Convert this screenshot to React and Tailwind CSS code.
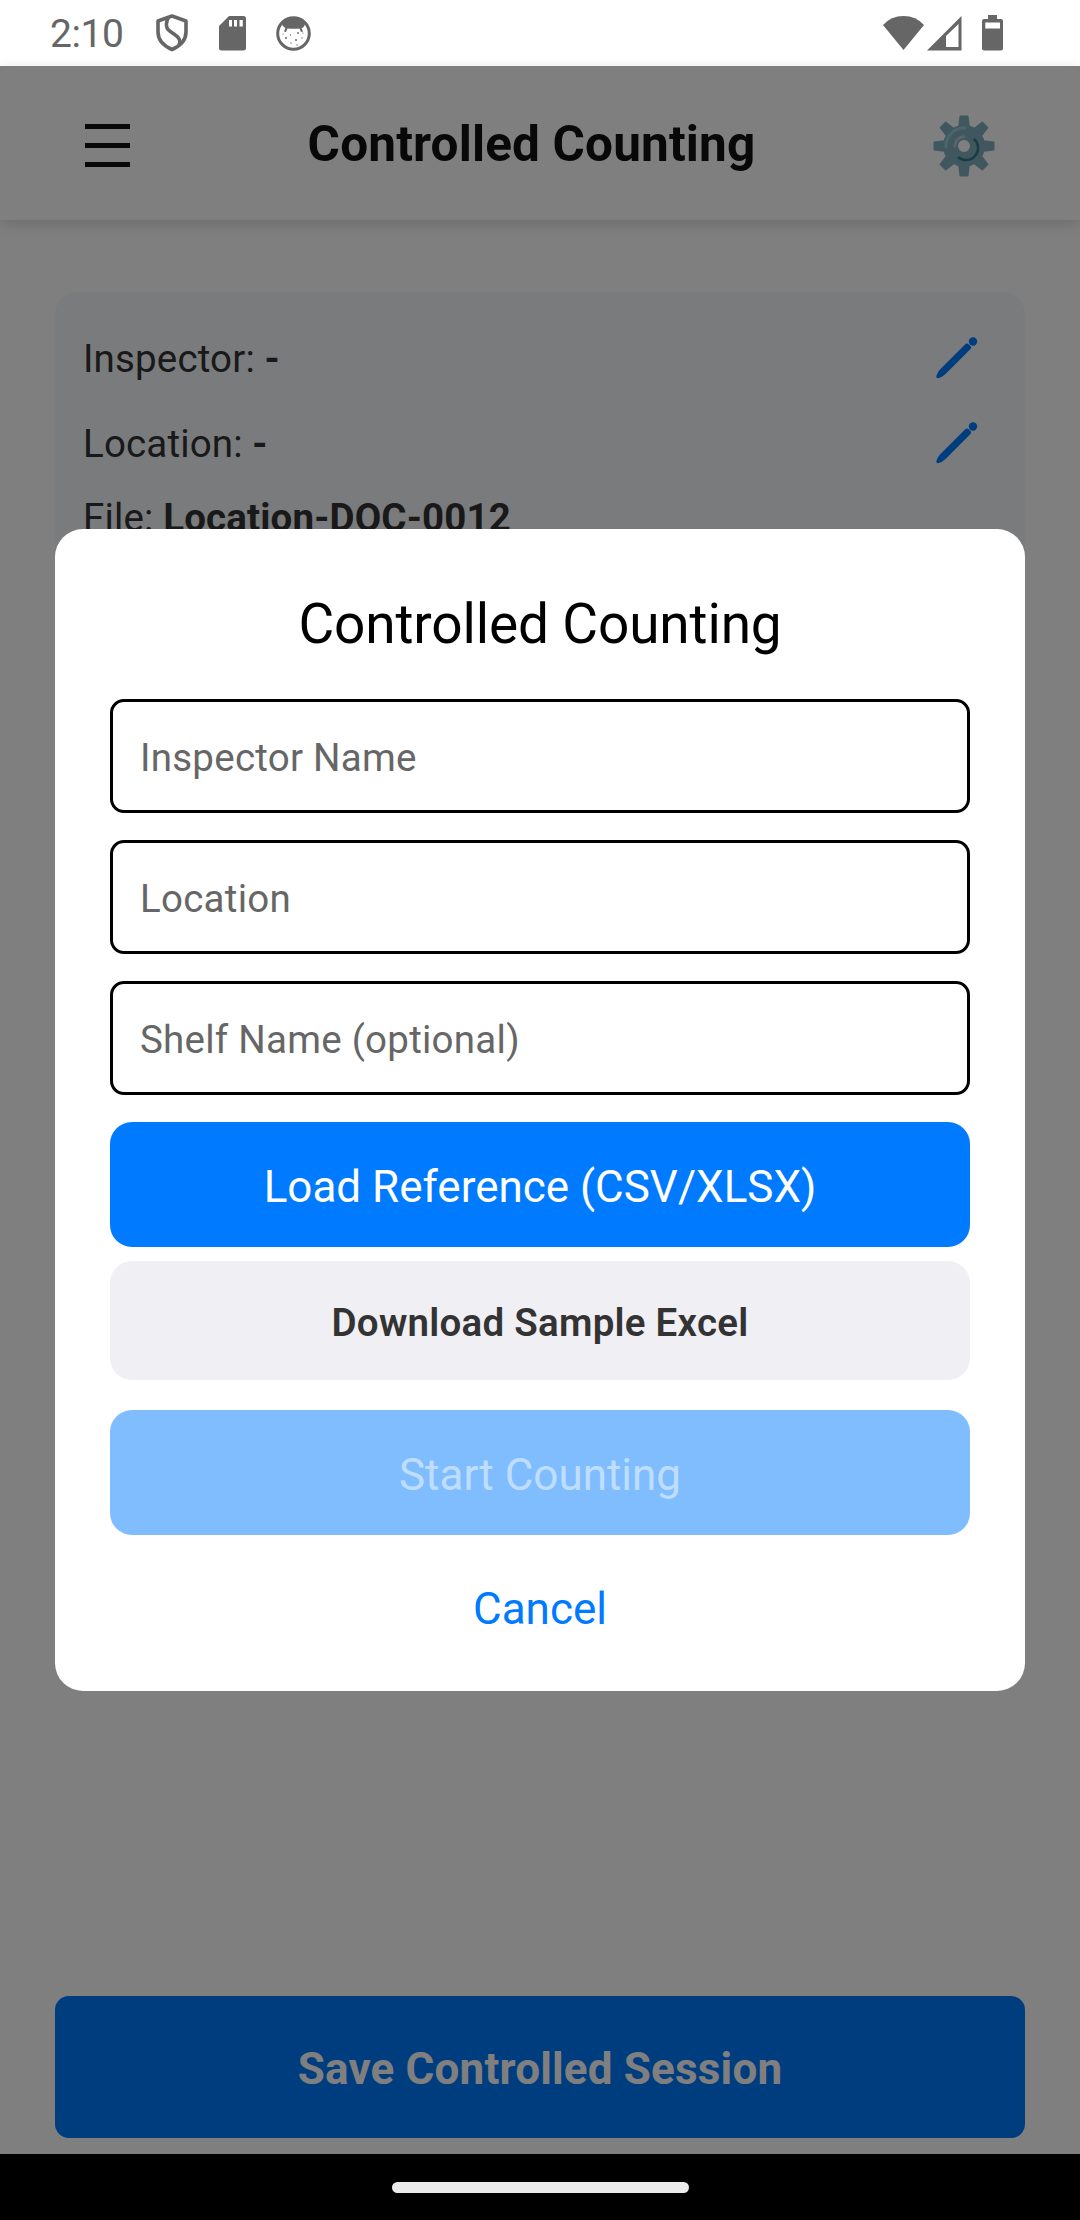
import { useState } from "react";

function StatusBar() {
  return (
    <div className="flex h-[66px] items-center bg-white text-[#666666]">
      <span className="ml-[50px] w-[106px] pt-[2px] text-[39px] leading-none tracking-[-0.4px]">2:10</span>
      <svg className="h-[38px] w-[32px]" viewBox="0 0 32 38" fill="none" stroke="currentColor" strokeWidth="3.6" strokeLinejoin="round">
        <path d="M16 2 30 7V18C30 26 24 32 16 35.500C8 32 2 26 2 18V7Z" />
        <path d="M12 4C8 14 12 16 18 20C24 24 25 27 23 31" />
      </svg>
      <svg className="ml-[31px] h-[35px] w-[27px]" viewBox="0 0 27 35" fill="currentColor">
        <path fillRule="evenodd" d="M10 0H24.500Q27 0 27 2.500V32Q27 34.500 24.500 34.500H2.500Q0 34.500 0 32V10ZM10 4V10.500H13V4ZM15 4V10.500H18V4ZM20.500 4V10.500H23.800V4Z" />
      </svg>
      <svg className="ml-[30px] h-[35px] w-[35px]" viewBox="0 0 35 35" fill="currentColor">
        <circle cx="17.500" cy="17.500" r="15.800" fill="none" stroke="currentColor" strokeWidth="3" />
        <path d="M7 6Q17 -2 28 6L29 8Q28 12 25.500 12L27 15.500L25 16L23.500 12.500Q17.500 13 11.500 12.500L10 16L8 15.500L9.500 12Q6 10 6 8Z" />
        <circle cx="10" cy="22" r="1" />
        <circle cx="20" cy="24" r="1" />
        <circle cx="22" cy="17" r="0.900" />
        <circle cx="14.500" cy="19" r="0.700" />
        <circle cx="26" cy="22" r="0.700" />
        <circle cx="15" cy="27" r="0.700" />
        <circle cx="21" cy="29" r="0.700" />
        <circle cx="7" cy="18" r="0.600" />
        <circle cx="27" cy="17" r="0.600" />
      </svg>
      <svg className="ml-auto h-[34px] w-[41px]" viewBox="0 0 41 34" fill="currentColor">
        <path d="M0 9Q8 0 20.500 0T41 9L20.500 34Z" />
      </svg>
      <svg className="ml-[3px] h-[35px] w-[35px]" viewBox="0 0 35 35" fill="currentColor">
        <path fillRule="evenodd" d="M34.500 0V34.500H0ZM31.500 8 19 20V31H31.500Z" />
      </svg>
      <svg className="mr-[77px] ml-[20px] h-[36px] w-[21px]" viewBox="0 0 21 36" fill="currentColor">
        <path fillRule="evenodd" d="M6 0H15V4H19Q21 4 21 6V33.500Q21 35.500 19 35.500H2Q0 35.500 0 33.500V6Q0 4 2 4H6ZM3.300 7.500V13.500H18V7.500Z" />
      </svg>
    </div>
  );
}

function Gear() {
  const teeth = [0, 45, 90, 135, 180, 225, 270, 315];
  return (
    <svg className="h-[62px] w-[62px]" viewBox="-31 -31 62 62">
      <g fill="#82aebf">
        {teeth.map((angle) => (
          <path key={angle} d="M-4.500 -29.700Q-4.400 -30.500 -3.600 -30.500H3.600Q4.400 -30.500 4.500 -29.700L6 -18H-6Z" transform={`rotate(${angle})`} />
        ))}
      </g>
      <circle r="13.500" fill="none" stroke="#82aebf" strokeWidth="15" />
      <path d="M10 -7A12 12 0 0 1 -6 11" fill="none" stroke="#2f7889" strokeWidth="2.500" />
      <path d="M-18 1A18 18 0 0 1 1 -18" fill="none" stroke="#94cbd6" strokeWidth="3" strokeLinecap="round" />
      <path d="M-9 1A9.500 9.500 0 0 1 1 -9.500" fill="none" stroke="#b0cdd4" strokeWidth="2.600" />
    </svg>
  );
}

function Pencil() {
  return (
    <svg className="h-[42px] w-[42px]" viewBox="0 0 42 42" fill="#007aff">
      <circle cx="37" cy="4.500" r="4.200" />
      <path d="M29 7.500Q31 5.500 33 7.500L34.500 9Q36 10.500 34.500 12L9.500 37Q6 40.500 2 41.200Q0 41.200 .3 39Q1.500 35 4 32.500Z" />
    </svg>
  );
}

function InfoRow({ label, value }) {
  return (
    <div className="flex h-[85px] items-center justify-between">
      <p className="pt-[2px]">
        {label}: <span className="font-bold">{value}</span>
      </p>
      <button className="mr-[19px]" aria-label={`Edit ${label}`}>
        <Pencil />
      </button>
    </div>
  );
}

function Field({ placeholder, value, onChange }) {
  return (
    <input
      className="mb-[27px] block h-[114px] w-full rounded-[14px] border-3 border-black px-[27px] pt-[3px] text-[38.5px] tracking-[0.25px] text-black placeholder:text-[#666666]"
      placeholder={placeholder}
      value={value}
      onChange={(e) => onChange(e.target.value)}
    />
  );
}

export default function App() {
  const [inspector, setInspector] = useState("");
  const [location, setLocation] = useState("");
  const [shelf, setShelf] = useState("");

  return (
    <div className="flex h-[2220px] w-[1080px] flex-col overflow-hidden bg-white font-[Roboto,sans-serif]">
      <StatusBar />

      <div className="relative flex h-[2088px] flex-col bg-white">
        <header className="flex h-[154px] shrink-0 items-center justify-between bg-white pr-[85px] pl-[85px] shadow-[0_4px_14px_rgba(0,0,0,0.15)]">
          <button className="flex w-[45px] flex-col gap-[14px] pt-[4px]" aria-label="Menu">
            <span className="h-[5px] bg-[#111111]" />
            <span className="h-[5px] bg-[#111111]" />
            <span className="h-[5px] bg-[#111111]" />
          </button>
          <h1 className="pt-[3px] text-[49.5px] font-bold tracking-[0.15px] text-[#111111]">Controlled Counting</h1>
          <button className="pt-[5px]" aria-label="Settings">
            <Gear />
          </button>
        </header>

        <main className="flex-1 px-[55px] pt-[72px]">
          <section className="h-[420px] rounded-[22px] bg-[#f3f6f9] px-[28px] pt-[23px] text-[38.5px] tracking-[0.15px] text-[#333333]">
            <InfoRow label="Inspector" value="-" />
            <InfoRow label="Location" value="-" />
            <p className="leading-[65px]">
              File: <span className="font-bold">Location-DOC-0012</span>
            </p>
          </section>
        </main>

        <div className="px-[55px] pb-[16px]">
          <button className="h-[142px] w-full rounded-[14px] bg-[#007aff] pt-[4px] text-[44px] font-bold tracking-[0.18px] text-white">
            Save Controlled Session
          </button>
        </div>

        <div className="absolute inset-0 flex items-center justify-center bg-black/50">
          <div className="h-[1162px] w-[970px] rounded-[28px] bg-white px-[55px] pt-[55px]">
            <h2 className="mb-[35px] text-center text-[55px] leading-[80px] tracking-[-0.15px] text-black">
              Controlled Counting
            </h2>
            <Field placeholder="Inspector Name" value={inspector} onChange={setInspector} />
            <Field placeholder="Location" value={location} onChange={setLocation} />
            <Field placeholder="Shelf Name (optional)" value={shelf} onChange={setShelf} />
            <button className="mb-[14px] block h-[125px] w-full rounded-[22px] bg-[#007aff] pt-[5px] text-[44px] text-white">
              Load Reference (CSV/XLSX)
            </button>
            <button className="mb-[30px] block h-[119px] w-full rounded-[22px] bg-[#efeff4] pt-[5px] text-[38.5px] font-semibold tracking-[0.25px] text-[#333333]">
              Download Sample Excel
            </button>
            <button className="block h-[125px] w-full rounded-[22px] bg-[#80bdff] pt-[5px] text-[44px] text-[#bfdeff]" disabled>
              Start Counting
            </button>
            <button className="mt-[11px] block h-[125px] w-full text-[44px] text-[#007aff]">Cancel</button>
          </div>
        </div>
      </div>

      <div className="flex h-[66px] items-center justify-center bg-black">
        <div className="h-[11px] w-[297px] rounded-full bg-[#ebebeb]" />
      </div>
    </div>
  );
}
